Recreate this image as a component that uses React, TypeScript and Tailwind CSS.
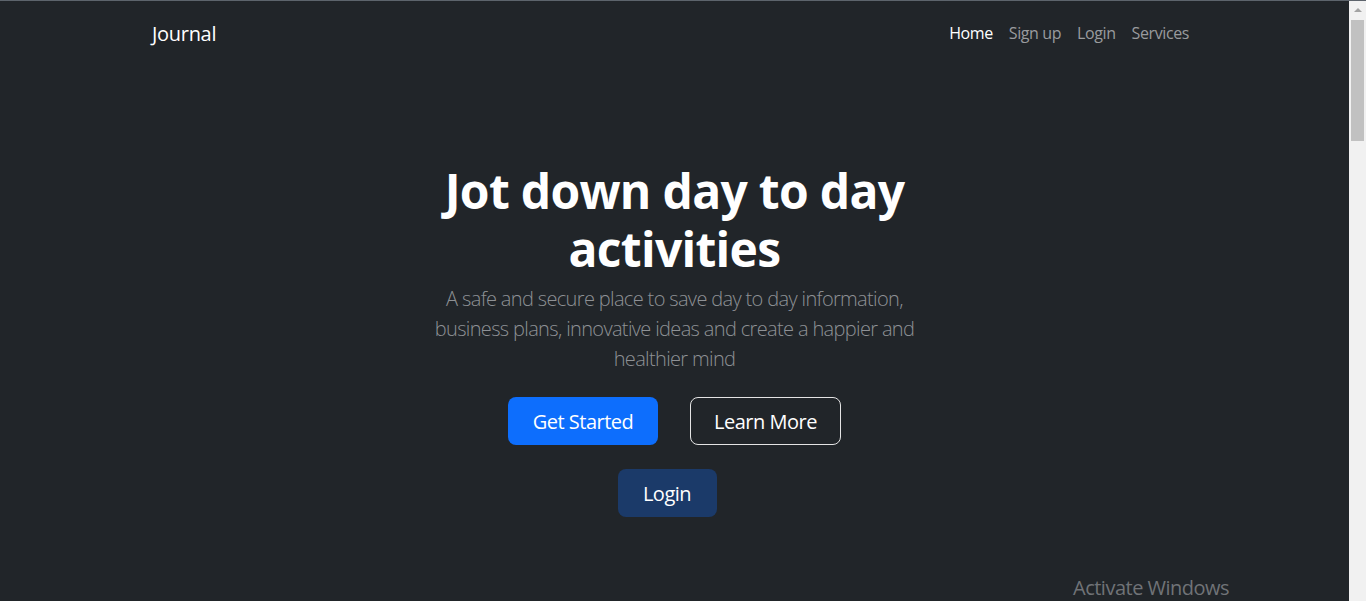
import React from 'react';

const navLinks = [
  { label: 'Home', active: true },
  { label: 'Sign up', active: false },
  { label: 'Login', active: false },
  { label: 'Services', active: false },
];

function Scrollbar() {
  return (
    <div className="w-[17px] shrink-0 bg-[#f1f1f1] flex flex-col items-center">
      <div className="h-[17px] w-full flex items-center justify-center">
        <div className="w-0 h-0 border-l-[4px] border-r-[4px] border-b-[4px] border-l-transparent border-r-transparent border-b-[#a3a3a3]" />
      </div>
      <div className="mt-[2px] w-[13px] h-[121px] bg-[#c1c1c1]" />
    </div>
  );
}

export default function App() {
  return (
    <div className="h-[601px] overflow-hidden flex flex-col bg-[#212529] font-['Open_Sans',sans-serif]">
      <div className="h-[1px] shrink-0 bg-[#5d646c]" />
      <div className="flex flex-1 min-h-0">
        <div className="relative flex-1 flex flex-col">
          {/* Navbar */}
          <header className="h-[67px] flex items-center justify-between pl-[152px] pr-[160px]">
            <a className="text-[20px] leading-[30px] text-white -mt-[1px] tracking-[-0.3px]">Journal</a>
            <nav className="flex items-center -mt-[4px] tracking-[-0.4px]">
              {navLinks.map((l) => (
                <a
                  key={l.label}
                  className={
                    'px-2 text-[16px] leading-6 last:pr-0 ' +
                    (l.active ? 'text-white' : 'text-[#999b9e]')
                  }
                >
                  {l.label}
                </a>
              ))}
            </nav>
          </header>

          {/* Hero */}
          <section className="flex flex-col items-center text-center pt-[94px]">
            <h1 className="text-[48px] leading-[57.6px] font-bold text-white tracking-[-0.7px]">
              Jot down day to day
              <br />
              activities
            </h1>
            <p className="mt-[7px] text-[20px] leading-[30px] font-light text-[#8e9195] tracking-[-0.65px]">
              A safe and secure place to save day to day information,
              <br />
              business plans, innovative ideas and create a happier and
              <br />
              healthier mind
            </p>
            <div className="mt-[23px] flex gap-[32px] tracking-[-0.5px]">
              <button className="w-[150px] h-[48px] pt-[2px] rounded-[8px] bg-[#0d6efd] text-white text-[20px]">
                Get Started
              </button>
              <button className="w-[151px] h-[48px] pt-[2px] rounded-[8px] border border-[#e4e4e4] text-white text-[20px]">
                Learn More
              </button>
            </div>
            <button className="mt-[24px] mr-[15px] w-[99px] h-[48px] pt-[2px] rounded-[8px] bg-[#1b3a69] text-white text-[20px] tracking-[-0.5px]">
              Login
            </button>
          </section>

          <div className="absolute left-[1073px] top-[572px] text-[20px] text-[#707377] whitespace-nowrap tracking-[-0.5px]">
            Activate Windows
          </div>
        </div>
        <Scrollbar />
      </div>
    </div>
  );
}
